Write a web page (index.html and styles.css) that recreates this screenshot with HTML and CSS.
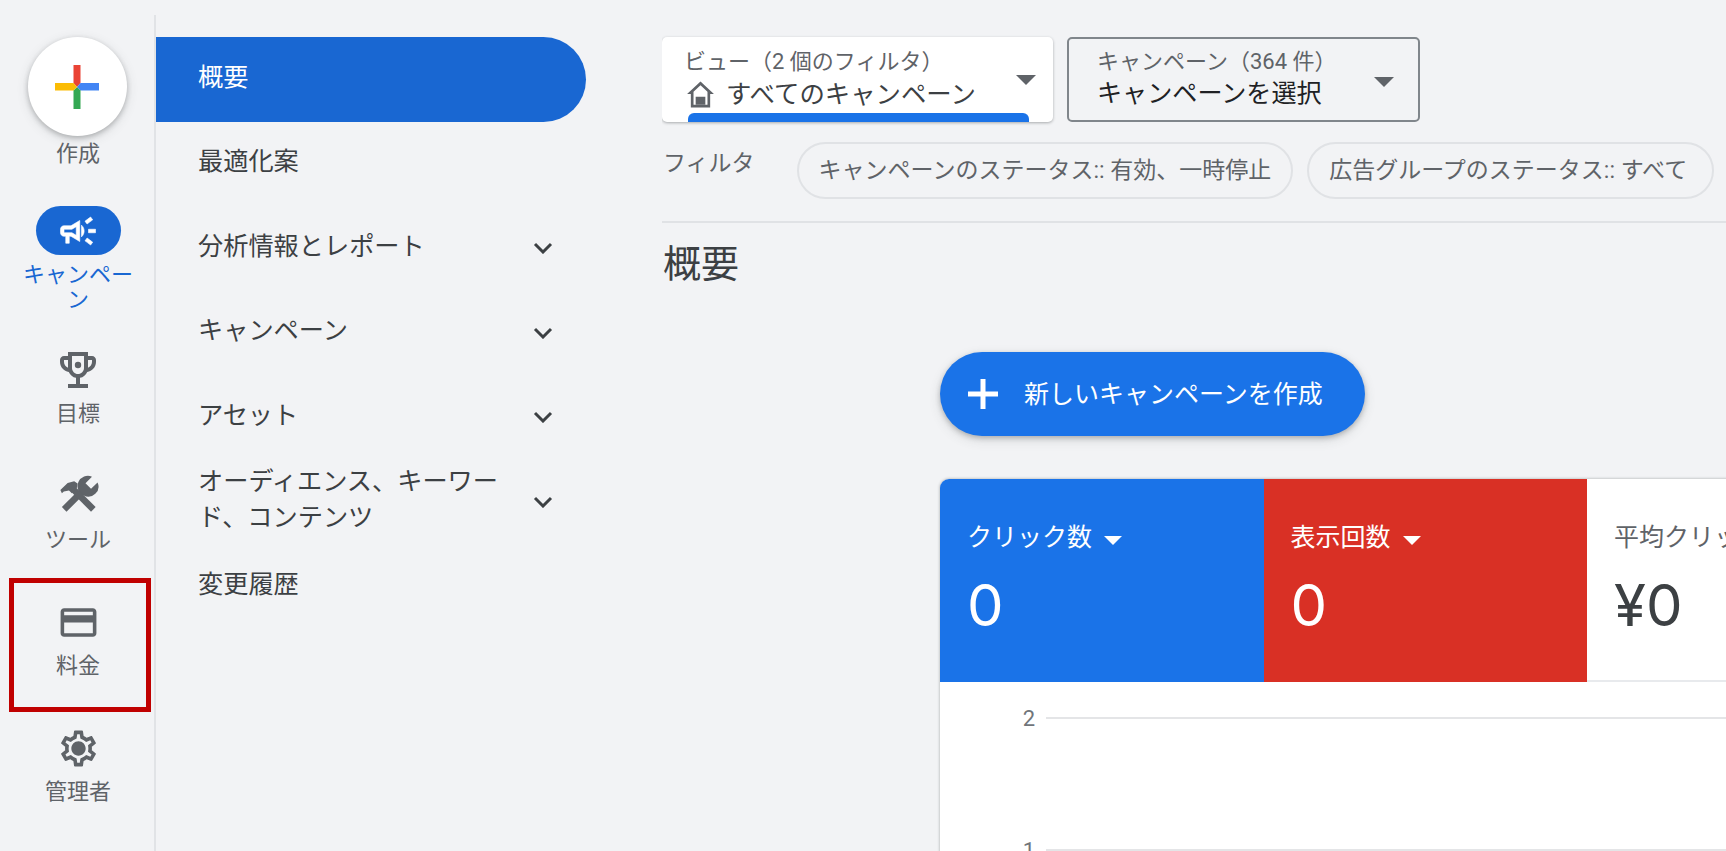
FILE: index.html
```html
<!DOCTYPE html>
<html lang="ja">
<head>
<meta charset="utf-8">
<title>概要</title>
<link rel="stylesheet" href="styles.css">
</head>
<body>
<div class="page">
  <aside class="rail">
    <div class="rail-item rail-item-fab">
      <div class="fab">
        <svg class="fab-plus" viewBox="0 0 44 44">
          <polygon fill="#ea4335" points="18.500,0 25.500,0 25.500,18 22,22 18.500,18"/>
          <polygon fill="#4285f4" points="25.500,18 44,18 44,25.500 25.500,25.500 22,22"/>
          <polygon fill="#34a853" points="18.500,25.500 22,22 25.500,25.500 25.500,44 18.500,44"/>
          <polygon fill="#fbbc04" points="0,18 18.500,18 22,22 18.500,25.500 0,25.500"/>
        </svg>
      </div>
      <span class="rail-label rail-label-fab">作成</span>
    </div>
    <div class="rail-item rail-item-active">
      <div class="rail-pill">
        <svg class="icon-pill" viewBox="0 0 24 24"><path d="M18 11v2h4v-2h-4zm-2 6.610c.96.71 2.210 1.650 3.200 2.390.4-.53.8-1.070 1.200-1.600-.99-.74-2.240-1.680-3.200-2.400-.4.54-.8 1.080-1.200 1.610zM20.400 5.600c-.4-.53-.8-1.070-1.200-1.600-.99.74-2.240 1.680-3.200 2.400.4.53.8 1.070 1.200 1.600.96-.72 2.210-1.650 3.200-2.400zM4 9c-1.100 0-2 .9-2 2v2c0 1.100.9 2 2 2h1v4h2v-4h1l5 3V6L8 9H4zm5.030 1.710L11 9.530v4.940l-1.970-1.180-.48-.29H4v-2h4.550l.48-.29zM15.500 12c0-1.330-.58-2.530-1.500-3.350v6.690c.92-.81 1.500-2.010 1.500-3.340z"/></svg>
      </div>
      <span class="rail-label rail-label-active">キャンペーン</span>
    </div>
    <div class="rail-item">
      <div class="rail-icon">
        <svg class="icon-lg" viewBox="0 0 24 24"><path d="M19 5h-2V3H7v2H5c-1.100 0-2 .9-2 2v1c0 2.550 1.920 4.630 4.390 4.940.63 1.500 1.980 2.630 3.610 2.960V19H7v2h10v-2h-4v-3.100c1.630-.33 2.980-1.460 3.610-2.960C19.080 12.630 21 10.550 21 8V7c0-1.100-.9-2-2-2zM5 8V7h2v3.820C5.840 10.400 5 9.300 5 8zm7 6c-1.650 0-3-1.350-3-3V5h6v6c0 1.650-1.350 3-3 3zm7-6c0 1.300-.84 2.400-2 2.820V7h2v1z"/><circle cx="12" cy="9.500" r="1.600"/></svg>
      </div>
      <span class="rail-label">目標</span>
    </div>
    <div class="rail-item">
      <div class="rail-icon">
        <svg class="icon-tools" viewBox="0 0 24 24">
          <path class="tool-line" d="M4.800 19L15 8.800"/>
          <path d="M19.300 1.900L15.900 5.300l2.900 2.900 3.400-3.300A5.300 5.300 0 0 1 15 11.800 5.300 5.300 0 0 1 19.300 1.900z"/>
          <path class="tool-line" d="M9.500 8.500L20 19"/>
          <path d="M2.800 8.900L6.600 5.200l3.400-.9 1.800 1.200-.3 2.100-1.300 1.500-1.400 1.500-1.500-1.500-2.700.6-1 .8z"/>
        </svg>
      </div>
      <span class="rail-label">ツール</span>
    </div>
    <div class="rail-item">
      <div class="annotation"></div>
      <div class="rail-icon">
        <svg class="icon-md" viewBox="0 0 24 24"><path d="M20 4H4c-1.110 0-1.990.89-1.990 2L2 18c0 1.110.89 2 2 2h16c1.110 0 2-.89 2-2V6c0-1.110-.89-2-2-2zm0 14H4v-6h16v6zm0-10H4V6h16v2z"/></svg>
      </div>
      <span class="rail-label">料金</span>
    </div>
    <div class="rail-item">
      <div class="rail-icon">
        <svg class="icon-md" viewBox="0 0 24 24"><path d="M19.430 12.980c.04-.32.07-.64.07-.98 0-.34-.03-.66-.07-.98l2.110-1.650c.19-.15.24-.42.12-.64l-2-3.460c-.09-.16-.26-.25-.44-.25-.06 0-.12.01-.17.03l-2.490 1c-.52-.4-1.080-.73-1.690-.98l-.38-2.650C14.460 2.180 14.250 2 14 2h-4c-.25 0-.46.18-.49.42l-.38 2.650c-.61.25-1.170.59-1.690.98l-2.490-1c-.06-.02-.12-.03-.18-.03-.17 0-.34.09-.43.25l-2 3.460c-.13.22-.07.49.12.64l2.110 1.650c-.04.32-.07.65-.07.98 0 .33.03.66.07.98l-2.110 1.650c-.19.15-.24.42-.12.64l2 3.460c.09.16.26.25.44.25.06 0 .12-.01.17-.03l2.490-1c.52.4 1.080.73 1.690.98l.38 2.650c.03.24.24.42.49.42h4c.25 0 .46-.18.49-.42l.38-2.650c.61-.25 1.170-.59 1.690-.98l2.490 1c.06.02.12.03.18.03.17 0 .34-.09.43-.25l2-3.460c.12-.22.07-.49-.12-.64l-2.110-1.650zm-1.980-1.710c.04.31.05.52.05.73 0 .21-.02.43-.05.73l-.14 1.130.89.7 1.080.84-.7 1.210-1.270-.51-1.040-.42-.9.68c-.43.32-.84.56-1.250.73l-1.060.43-.16 1.130-.2 1.350h-1.400l-.19-1.350-.16-1.130-1.060-.43c-.43-.18-.83-.41-1.230-.71l-.91-.7-1.060.43-1.270.51-.7-1.210 1.080-.84.89-.7-.14-1.130c-.03-.31-.05-.54-.05-.74s.02-.43.05-.73l.14-1.130-.89-.7-1.080-.84.7-1.210 1.270.51 1.040.42.9-.68c.43-.32.84-.56 1.250-.73l1.060-.43.16-1.130.2-1.350h1.390l.19 1.350.16 1.130 1.060.43c.43.18.83.41 1.230.71l.91.7 1.060-.43 1.270-.51.7 1.210-1.070.85-.89.7.14 1.130zM12 8c-2.210 0-4 1.790-4 4s1.790 4 4 4 4-1.790 4-4-1.790-4-4-4z"/></svg>
      </div>
      <span class="rail-label">管理者</span>
    </div>
  </aside>

  <nav class="nav">
    <div class="nav-row nav-row-active"><span class="nav-text">概要</span></div>
    <div class="nav-row"><span class="nav-text">最適化案</span></div>
    <div class="nav-row"><span class="nav-text">分析情報とレポート</span><svg class="chevron" viewBox="0 0 20 12"><path d="M2 2l8 8 8-8"/></svg></div>
    <div class="nav-row"><span class="nav-text">キャンペーン</span><svg class="chevron" viewBox="0 0 20 12"><path d="M2 2l8 8 8-8"/></svg></div>
    <div class="nav-row"><span class="nav-text">アセット</span><svg class="chevron" viewBox="0 0 20 12"><path d="M2 2l8 8 8-8"/></svg></div>
    <div class="nav-row"><span class="nav-text">オーディエンス、キーワード、コンテンツ</span><svg class="chevron" viewBox="0 0 20 12"><path d="M2 2l8 8 8-8"/></svg></div>
    <div class="nav-row"><span class="nav-text">変更履歴</span></div>
  </nav>

  <main class="main">
    <div class="selects">
      <div class="select select-view">
        <div class="select-body">
          <div class="select-label">ビュー（2 個のフィルタ）</div>
          <div class="select-value">
            <svg class="home" viewBox="0 0 27 27"><path fill-rule="evenodd" d="M13.500 1.500L1 13h3.500v12.500h18V13H26L13.500 1.500zM7 23V11l6.500-6 6.500 6v12H7z"/><path d="M9 15.500h9V23H9z"/></svg>
            <span>すべてのキャンペーン</span>
          </div>
        </div>
        <span class="caret"></span>
        <div class="select-bar"></div>
      </div>
      <div class="select select-campaign">
        <div class="select-body">
          <div class="select-label">キャンペーン（364 件）</div>
          <div class="select-value select-value-dark"><span>キャンペーンを選択</span></div>
        </div>
        <span class="caret"></span>
      </div>
    </div>

    <div class="filters">
      <span class="filters-label">フィルタ</span>
      <span class="chip">キャンペーンのステータス:: 有効、一時停止</span>
      <span class="chip chip-last">広告グループのステータス:: すべて</span>
    </div>

    <h1 class="title">概要</h1>

    <button class="create" type="button">
      <svg class="create-plus" viewBox="0 0 30 30"><path d="M15 0v30M0 15h30"/></svg>
      <span class="create-text">新しいキャンペーンを作成</span>
    </button>

    <section class="card">
      <div class="tiles">
        <div class="tile tile-blue">
          <div class="tile-label">クリック数<span class="tile-caret"></span></div>
          <div class="tile-value">0</div>
        </div>
        <div class="tile tile-red">
          <div class="tile-label">表示回数<span class="tile-caret"></span></div>
          <div class="tile-value">0</div>
        </div>
        <div class="tile tile-white">
          <div class="tile-label">平均クリック単価</div>
          <div class="tile-value">¥0</div>
        </div>
      </div>
      <div class="chart">
        <div class="chart-row"><span class="chart-tick">2</span><span class="chart-line"></span></div>
        <div class="chart-row"><span class="chart-tick">1</span><span class="chart-line"></span></div>
      </div>
    </section>
  </main>
</div>
</body>
</html>
```

FILE: styles.css
```css
* { box-sizing: border-box; }

html, body {
  margin: 0;
  height: 100%;
  overflow: hidden;
}

body {
  background: #f2f3f5;
  color: #3c4043;
  font-family: Roboto, "Noto Sans CJK JP", sans-serif;
}

.page {
  display: flex;
  height: 851px;
  overflow: hidden;
}

/* Left rail */
.rail {
  flex: 0 0 156px;
  margin-top: 15px;
  padding-top: 22px;
  border-right: 2px solid #e1e3e6;
  display: flex;
  flex-direction: column;
  align-items: center;
}

.rail-item {
  position: relative;
  width: 154px;
  display: flex;
  flex-direction: column;
  align-items: center;
  padding-bottom: 46px;
}

.rail-item-fab { padding-bottom: 40px; }
.rail-item-active { padding-bottom: 34px; }

.annotation {
  position: absolute;
  left: 9px;
  top: -20px;
  width: 142px;
  height: 134px;
  border: 5px solid #c00000;
}

.fab {
  width: 99px;
  height: 99px;
  border-radius: 50%;
  background: #fff;
  box-shadow: 0 2px 5px rgba(60, 64, 67, .3), 0 3px 12px rgba(60, 64, 67, .15);
  display: flex;
  align-items: center;
  justify-content: center;
}

.fab-plus { width: 44px; height: 44px; }

.rail-pill {
  width: 85px;
  height: 49px;
  margin-left: 2px;
  border-radius: 25px;
  background: #1967d2;
  display: flex;
  align-items: center;
  justify-content: center;
}

.icon-pill { width: 42px; height: 42px; fill: #fff; stroke: #fff; stroke-width: .35; }

.rail-icon {
  height: 48px;
  margin-left: 2px;
  display: flex;
  align-items: center;
  justify-content: center;
}

.icon-lg { width: 48px; height: 48px; fill: #5f6368; }
.icon-md { width: 43px; height: 43px; fill: #5f6368; }
.icon-tools { width: 46px; height: 46px; fill: #5f6368; }

.tool-line {
  fill: none;
  stroke: #5f6368;
  stroke-width: 3.400;
}

.rail-label {
  width: 114px;
  margin-top: 7px;
  margin-left: 2px;
  font-size: 22px;
  line-height: 25px;
  text-align: center;
  color: #5f6368;
}

.rail-label-fab { margin-top: 5px; }
.rail-label-active { color: #1967d2; }

/* Section nav */
.nav {
  flex: 0 0 430px;
  padding-top: 37px;
}

.nav-row {
  height: 84.500px;
  padding-left: 42px;
  padding-right: 33px;
  display: flex;
  align-items: center;
  justify-content: space-between;
  font-size: 25.200px;
  color: #3c4043;
}

.nav-row-active {
  background: #1967d2;
  color: #fff;
  border-radius: 0 43px 43px 0;
}

.nav-text {
  width: 318px;
  line-height: 36px;
  position: relative;
  top: -1.500px;
}

.chevron {
  width: 20px;
  height: 12px;
  fill: none;
  stroke: #3c4043;
  stroke-width: 3;
}

/* Main */
.main {
  flex: 1;
  min-width: 0;
  margin-left: 76px;
  padding-top: 37px;
  overflow: hidden;
}

.selects {
  display: flex;
  gap: 14px;
}

.select {
  position: relative;
  height: 85px;
  border-radius: 5px;
  display: flex;
  justify-content: space-between;
  overflow: hidden;
}

.select-view {
  width: 391px;
  padding: 0 17px 0 22px;
  background: #fff;
  box-shadow: 0 1px 3px rgba(60, 64, 67, .4);
}

.select-campaign {
  width: 353px;
  padding: 0 24px 0 28px;
  border: 2px solid #80868b;
}

.select-body { padding-top: 13px; }

.select-campaign .select-body { padding-top: 11px; }

.select-label {
  font-size: 22px;
  line-height: 24px;
  color: #5f6368;
}

.select-value {
  margin-top: 3px;
  display: flex;
  align-items: center;
  gap: 11px;
  font-size: 25.400px;
  line-height: 34px;
  color: #3c4043;
}

.select-value-dark { color: #202124; font-size: 25.100px; }

.home { width: 29px; height: 29px; fill: #5f6368; margin-left: 2px; }

.caret {
  margin-top: 38px;
  width: 0;
  height: 0;
  border-left: 10px solid transparent;
  border-right: 10px solid transparent;
  border-top: 10px solid #5f6368;
}

.select-bar {
  position: absolute;
  left: 26px;
  right: 24px;
  bottom: 0;
  height: 9px;
  background: #1a73e8;
  border-radius: 6px 6px 0 0;
}

/* Filters */
.filters {
  display: flex;
  align-items: flex-start;
  margin-top: 20px;
  font-size: 23px;
  color: #5f6368;
}

.filters-label {
  flex-shrink: 0;
  margin-left: 1px;
  margin-right: 42px;
  line-height: 44px;
  white-space: nowrap;
}

.chip {
  flex-shrink: 0;
  height: 57px;
  margin-right: 14px;
  padding: 0 20px;
  border: 2px solid #e0e2e5;
  border-radius: 29px;
  line-height: 53px;
  white-space: nowrap;
}

.chip-last { padding-right: 25px; }

/* Heading */
.title {
  margin: 22px 0 0;
  padding: 15px 0 0 1px;
  border-top: 2px solid #e0e2e5;
  font-size: 38px;
  line-height: 52px;
  font-weight: 400;
  color: #3c4043;
}

/* Create button */
.create {
  margin: 62px 0 0 278px;
  width: 425px;
  height: 84px;
  padding: 0 0 0 28px;
  border: 0;
  border-radius: 42px;
  background: #1a73e8;
  color: #fff;
  font: inherit;
  font-size: 25px;
  display: flex;
  align-items: center;
  gap: 26px;
  box-shadow: 0 2px 5px rgba(60, 64, 67, .3), 0 4px 12px rgba(60, 64, 67, .15);
}

.create-text { margin-bottom: 5px; }

.create-plus {
  width: 30px;
  height: 30px;
  fill: none;
  stroke: #fff;
  stroke-width: 5;
}

/* Card */
.card {
  width: 1100px;
  margin: 43px 0 0 278px;
  background: #fff;
  border-radius: 9px 0 0 0;
  box-shadow: 0 0 3px rgba(60, 64, 67, .45);
  height: 400px;
}

.tiles { display: flex; }

.tile {
  flex: 0 0 323.500px;
  height: 203px;
  padding: 41px 27px 0;
}

.tile-blue { background: #1a73e8; color: #fff; border-radius: 9px 0 0 0; }
.tile-red { background: #d93025; color: #fff; }
.tile-white {
  flex-grow: 1;
  background: #fff;
  color: #5f6368;
  border-bottom: 2px solid #e8eaed;
}

.tile-label {
  display: flex;
  align-items: center;
  font-size: 25px;
  line-height: 36px;
}

.tile-caret {
  margin-left: 12px;
  margin-top: 5px;
  width: 0;
  height: 0;
  border-left: 9px solid transparent;
  border-right: 9px solid transparent;
  border-top: 9px solid #fff;
}

.tile-value {
  margin-top: 16px;
  font-family: Inter, Roboto, sans-serif;
  font-size: 58px;
  line-height: 66px;
}

.tile-white .tile-value { color: #3c4043; }

.chart {
  padding: 24px 0 0 72px;
}

.chart-row {
  display: flex;
  align-items: center;
  gap: 11px;
  height: 24px;
  margin-bottom: 108px;
  font-size: 22px;
  color: #70757a;
}

.chart-tick { width: 23px; text-align: right; }

.chart-line {
  flex: 1;
  height: 2px;
  background: #e4e5e7;
}
```
